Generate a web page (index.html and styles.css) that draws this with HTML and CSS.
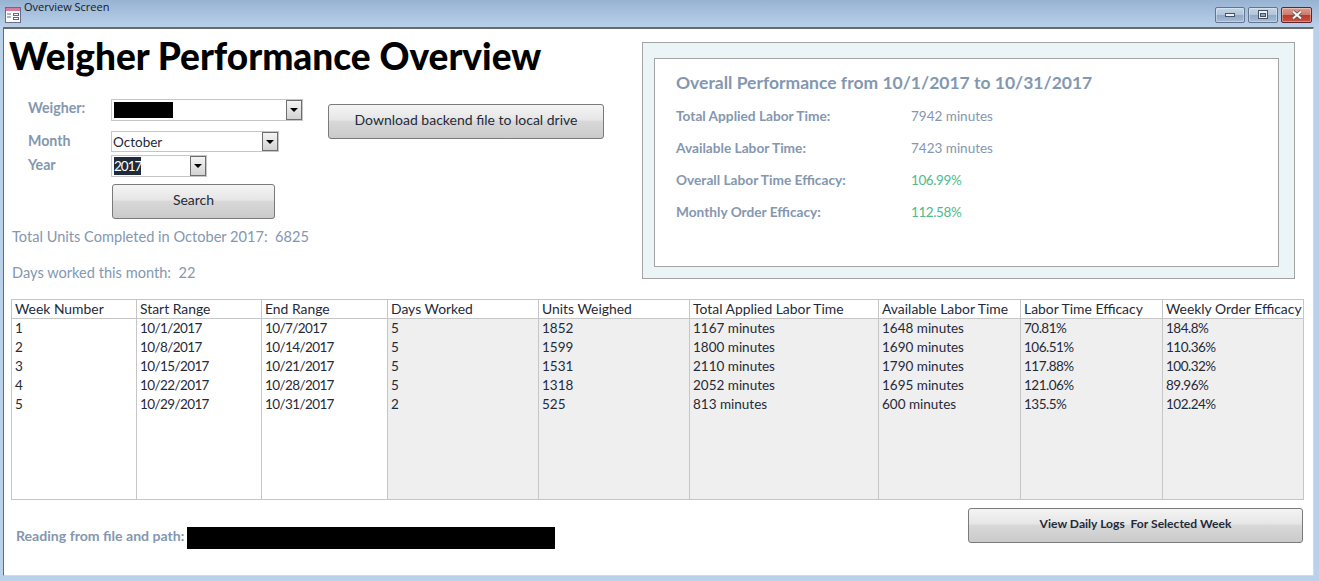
FILE: index.html
```html
<!DOCTYPE html>
<html lang="en">
<head>
    <meta charset="UTF-8">
    <meta name="viewport" content="width=device-width, initial-scale=1.0">
    <title>Overview Screen</title>
    <link rel="stylesheet" href="styles.css">
</head>
<body>
    <div class="window">
        <div class="titlebar">
            <svg class="app-icon" width="16" height="16" viewBox="0 0 16 16">
                <rect x="0.5" y="0.5" width="15" height="15" fill="#fff" stroke="#6d6a8e"/>
                <rect x="1" y="1" width="14" height="3" fill="#d77c9c"/>
                <path d="M2 7h4M2 10h4" stroke="#5a6a90" fill="none"/>
                <rect x="8.5" y="6.5" width="5" height="2" fill="#fff" stroke="#5a6a90"/>
                <rect x="8.5" y="10.5" width="5" height="2" fill="#fff" stroke="#5a6a90"/>
            </svg>
            <span class="window-title">Overview Screen</span>
            <div class="window-buttons">
                <div class="win-btn">
                    <svg width="12" height="6" viewBox="0 0 12 6"><rect x="1.5" y="1.5" width="9" height="3" fill="#eef2f6" stroke="#46505e"/></svg>
                </div>
                <div class="win-btn">
                    <svg width="12" height="10" viewBox="0 0 12 10"><rect x="1.5" y="0.5" width="9" height="8" fill="#eef2f6" stroke="#46505e"/><rect x="3.5" y="3.5" width="5" height="3" fill="#8fa6c2" stroke="#46505e"/></svg>
                </div>
                <div class="win-btn win-close">
                    <svg width="14" height="10" viewBox="0 0 14 10"><path d="M3 1.5 11 8.5M11 1.5 3 8.5" stroke="#4e4e4e" stroke-width="3.6" fill="none"/><path d="M3 1.5 11 8.5M11 1.5 3 8.5" stroke="#f4f4f4" stroke-width="2.2" fill="none"/></svg>
                </div>
            </div>
        </div>

        <div class="client">
            <div class="top">
                <div class="left">
                    <h1>Weigher Performance Overview</h1>
                    <div class="form-area">
                        <div class="fields">
                            <div class="field field-weigher">
                                <label>Weigher:</label>
                                <div class="combo combo-weigher">
                                    <span class="combo-value"><span class="redact-name"></span></span>
                                    <span class="combo-arrow"></span>
                                </div>
                            </div>
                            <div class="field field-month">
                                <label>Month</label>
                                <div class="combo combo-month">
                                    <span class="combo-value">October</span>
                                    <span class="combo-arrow"></span>
                                </div>
                            </div>
                            <div class="field field-year">
                                <label>Year</label>
                                <div class="combo combo-year">
                                    <span class="combo-value"><span class="selected">2017</span></span>
                                    <span class="combo-arrow"></span>
                                </div>
                            </div>
                            <button class="btn btn-search">Search</button>
                        </div>
                        <button class="btn btn-download">Download backend file to local drive</button>
                    </div>
                    <p class="stat stat-units">Total Units Completed in October 2017:&nbsp; 6825</p>
                    <p class="stat stat-days">Days worked this month:&nbsp; 22</p>
                </div>

                <div class="panel">
                    <div class="panel-inner">
                        <h2>Overall Performance from 10/1/2017 to 10/31/2017</h2>
                        <div class="metric"><span class="metric-name">Total Applied Labor Time:</span><span>7942 minutes</span></div>
                        <div class="metric"><span class="metric-name">Available Labor Time:</span><span>7423 minutes</span></div>
                        <div class="metric"><span class="metric-name">Overall Labor Time Efficacy:</span><span class="good">106.99%</span></div>
                        <div class="metric"><span class="metric-name">Monthly Order Efficacy:</span><span class="good">112.58%</span></div>
                    </div>
                </div>
            </div>

            <table class="weeks">
                <colgroup>
                    <col class="c1"><col class="c2"><col class="c3"><col class="c4"><col class="c5">
                    <col class="c6"><col class="c7"><col class="c8"><col class="c9">
                </colgroup>
                <thead>
                    <tr>
                        <th>Week Number</th><th>Start Range</th><th>End Range</th><th>Days Worked</th><th>Units Weighed</th>
                        <th>Total Applied Labor Time</th><th>Available Labor Time</th><th>Labor Time Efficacy</th><th>Weekly Order Efficacy</th>
                    </tr>
                </thead>
                <tbody>
                    <tr><td>1</td><td>10/1/2017</td><td>10/7/2017</td><td>5</td><td>1852</td><td>1167 minutes</td><td>1648 minutes</td><td>70.81%</td><td>184.8%</td></tr>
                    <tr><td>2</td><td>10/8/2017</td><td>10/14/2017</td><td>5</td><td>1599</td><td>1800 minutes</td><td>1690 minutes</td><td>106.51%</td><td>110.36%</td></tr>
                    <tr><td>3</td><td>10/15/2017</td><td>10/21/2017</td><td>5</td><td>1531</td><td>2110 minutes</td><td>1790 minutes</td><td>117.88%</td><td>100.32%</td></tr>
                    <tr><td>4</td><td>10/22/2017</td><td>10/28/2017</td><td>5</td><td>1318</td><td>2052 minutes</td><td>1695 minutes</td><td>121.06%</td><td>89.96%</td></tr>
                    <tr><td>5</td><td>10/29/2017</td><td>10/31/2017</td><td>2</td><td>525</td><td>813 minutes</td><td>600 minutes</td><td>135.5%</td><td>102.24%</td></tr>
                    <tr class="filler"><td></td><td></td><td></td><td></td><td></td><td></td><td></td><td></td><td></td></tr>
                </tbody>
            </table>

            <div class="bottom">
                <div class="path">
                    <span class="path-label">Reading from file and path:</span>
                    <span class="redact-path"></span>
                </div>
                <button class="btn btn-logs">View Daily Logs&nbsp; For Selected Week</button>
            </div>
        </div>
    </div>
</body>
</html>
```

FILE: styles.css
```css
* {
    box-sizing: border-box;
}
html, body {
    margin: 0;
    height: 100%;
    overflow: hidden;
}
body {
    font-family: Lato, "Open Sans", sans-serif;
    font-size: 13.5px;
    color: #1f2a3a;
}
.window {
    width: 1319px;
    height: 581px;
    display: flex;
    flex-direction: column;
    background: #b9d1ea;
}

/* title bar */
.titlebar {
    height: 27px;
    flex: none;
    display: flex;
    align-items: flex-start;
    padding: 0 7px 0 5px;
    background: linear-gradient(#98b3d2, #b9d1ea);
}
.app-icon {
    margin-top: 7px;
}
.window-title {
    margin: 0 0 0 3px;
    font-family: "Open Sans", sans-serif;
    font-size: 11px;
    line-height: 14px;
    color: #10181f;
}
.window-buttons {
    margin-left: auto;
    margin-top: 7px;
    display: flex;
    gap: 3px;
}
.win-btn {
    width: 30px;
    height: 16px;
    display: flex;
    align-items: center;
    justify-content: center;
    border: 1px solid #62748f;
    border-radius: 2px;
    background: linear-gradient(#c3d4e6 0, #afc4dc 50%, #8fa9c7 52%, #a6bdd6 100%);
    box-shadow: inset 0 0 0 1px rgba(255,255,255,0.35);
}
.win-close {
    width: 31px;
    border-color: #5c2530;
    background: linear-gradient(#dd9a8e 0, #d0796c 48%, #bb3a2a 52%, #c45447 100%);
}

/* white form area */
.client {
    flex: none;
    width: 1311px;
    height: 549px;
    margin-left: 3px;
    background: #fff;
    border-top: 2px solid #6a6a6a;
    border-left: 1px solid #6a6a6a;
    border-right: 1px solid #d9d9d9;
    border-bottom: 1px solid #d9d9d9;
}
.top {
    display: flex;
    height: 270px;
}
.left {
    width: 638px;
    flex: none;
}
h1 {
    margin: 0;
    padding: 5px 0 0 5px;
    height: 70px;
    font-size: 37px;
    line-height: 44px;
    font-weight: 900;
    color: #000;
    white-space: nowrap;
}
.form-area {
    display: flex;
    align-items: flex-start;
}
.fields {
    width: 324px;
    flex: none;
}
.field {
    display: flex;
    align-items: flex-start;
}
.field label {
    width: 107px;
    padding-left: 24px;
    flex: none;
    font-size: 14.2px;
    line-height: 18px;
    font-weight: 700;
    color: #8497b0;
}
.field-month label, .field-year label {
    padding-top: 1px;
}
.field-weigher {
    height: 32px;
}
.field-month {
    height: 24px;
}
.field-year {
    height: 29px;
}
.combo {
    display: flex;
    height: 22px;
    border: 1px solid #c6c6c6;
    background: #fff;
}
.combo-weigher {
    width: 192px;
}
.combo-month {
    width: 168px;
    height: 21px;
}
.combo-year {
    width: 96px;
}
.combo-value {
    flex: 1;
    padding-left: 1px;
    line-height: 18px;
    display: flex;
    align-items: center;
}
.redact-name {
    width: 59px;
    height: 16px;
    margin-left: 1px;
    background: #000;
}
.selected {
    margin-left: 1px;
    background: #1f2a3a;
    color: #fff;
    width: 27px;
    height: 18px;
    letter-spacing: -1px;
    white-space: nowrap;
}
.combo-arrow {
    width: 16px;
    border: 1px solid #6d6d6d;
    background: linear-gradient(#f4f4f4, #d2d2d2);
    position: relative;
}
.combo-arrow::after {
    content: "";
    position: absolute;
    left: 3px;
    top: 7px;
    border-left: 4px solid transparent;
    border-right: 4px solid transparent;
    border-top: 4px solid #000;
}
.btn {
    display: block;
    height: 35px;
    padding: 0 0 5px;
    border: 1px solid #7a7a7a;
    border-radius: 3px;
    background: linear-gradient(#f4f4f4 0, #e6e6e6 45%, #d8d8d8 50%, #cacaca 100%);
    font-family: inherit;
    font-size: 14px;
    color: #1f2a3a;
}
.btn-search {
    width: 163px;
    margin-left: 108px;
}
.btn-download {
    width: 276px;
    margin-top: 5px;
}
.stat {
    margin: 0;
    padding-left: 8px;
    font-size: 14.6px;
    color: #8497b0;
    line-height: 18px;
}
.stat-units {
    margin-top: 9px;
}
.stat-days {
    margin-top: 18px;
}

/* overall performance panel */
.panel {
    width: 653px;
    height: 237px;
    margin: 13px 0 0;
    flex: none;
    padding: 15px 15px 11px 11px;
    background: #ebf4f7;
    border: 1px solid #a3a3a3;
}
.panel-inner {
    width: 625px;
    height: 209px;
    padding: 13px 21px;
    background: #fff;
    border: 1px solid #a3a3a3;
    color: #8497b0;
}
h2 {
    margin: 0 0 12px;
    font-size: 17.5px;
    line-height: 22px;
    font-weight: 700;
}
.metric {
    display: flex;
    height: 32px;
    line-height: 20px;
}
.metric-name {
    width: 235px;
    font-size: 13.7px;
    font-weight: 700;
}
.good {
    color: #4dbb8c;
    letter-spacing: -0.4px;
}

/* weekly table */
.weeks {
    width: 1292px;
    height: 201px;
    margin-left: 7px;
    border-collapse: collapse;
    table-layout: fixed;
    border: 1px solid #c6c6c6;
}
.c1, .c2 { width: 125px; }
.c3 { width: 126px; }
.c4, .c5 { width: 151px; }
.c6 { width: 189px; }
.c7, .c8 { width: 142px; }
.c9 { width: 141px; }
.weeks th, .weeks td {
    padding: 0 0 0 3px;
    border-left: 1px solid #c6c6c6;
    font-weight: 400;
    text-align: left;
    white-space: nowrap;
    overflow: hidden;
    height: 19px;
    line-height: 18px;
}
.weeks th {
    border-bottom: 1px solid #c6c6c6;
    font-size: 13.9px;
}
.weeks td:nth-child(n+4) {
    background: #efefef;
}
/* digits run narrower in the original font */
.weeks td:nth-child(2), .weeks td:nth-child(3) {
    letter-spacing: -0.6px;
}
.weeks td:nth-child(8), .weeks td:nth-child(9) {
    letter-spacing: -0.5px;
}
.weeks .filler td {
    height: auto;
}

/* bottom strip */
.bottom {
    display: flex;
    align-items: flex-start;
    justify-content: space-between;
    width: 1299px;
    padding: 8px 0 0 12px;
}
.path {
    display: flex;
    align-items: flex-start;
    margin-top: 19px;
}
.path-label {
    width: 171px;
    font-size: 14.1px;
    line-height: 18px;
    font-weight: 700;
    color: #8497b0;
    white-space: nowrap;
}
.redact-path {
    width: 368px;
    height: 22px;
    background: #000;
}
.btn-logs {
    width: 335px;
    font-weight: 700;
    font-size: 12.1px;
}
```
